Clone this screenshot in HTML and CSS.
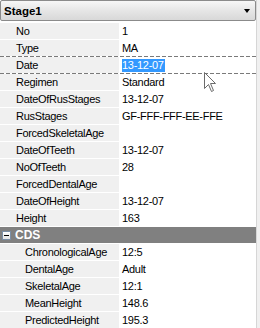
FILE: index.html
```html
<!DOCTYPE html>
<html>
<head>
<meta charset="utf-8">
<link rel="stylesheet" href="styles.css">
</head>
<body>
<div class="grid">
  <div class="header">
    <span class="title">Stage1</span>
    <span class="arrow"></span>
  </div>
  <div class="rows">
    <div class="row"><div class="name">No</div><div class="value">1</div></div>
    <div class="row"><div class="name">Type</div><div class="value">MA</div></div>
    <div class="row editing"><div class="name">Date</div><div class="value"><span class="sel">13-12-07</span></div></div>
    <div class="row after-edit"><div class="name">Regimen</div><div class="value">Standard</div></div>
    <div class="row"><div class="name">DateOfRusStages</div><div class="value">13-12-07</div></div>
    <div class="row"><div class="name">RusStages</div><div class="value">GF-FFF-FFF-EE-FFE</div></div>
    <div class="row"><div class="name">ForcedSkeletalAge</div><div class="value"></div></div>
    <div class="row"><div class="name">DateOfTeeth</div><div class="value">13-12-07</div></div>
    <div class="row"><div class="name">NoOfTeeth</div><div class="value">28</div></div>
    <div class="row"><div class="name">ForcedDentalAge</div><div class="value"></div></div>
    <div class="row"><div class="name">DateOfHeight</div><div class="value">13-12-07</div></div>
    <div class="row"><div class="name">Height</div><div class="value">163</div></div>
    <div class="cat"><span class="toggle"><span class="minus"></span></span><span class="cat-label">CDS</span></div>
    <div class="row child"><div class="name">ChronologicalAge</div><div class="value">12:5</div></div>
    <div class="row child"><div class="name">DentalAge</div><div class="value">Adult</div></div>
    <div class="row child"><div class="name">SkeletalAge</div><div class="value">12:1</div></div>
    <div class="row child"><div class="name">MeanHeight</div><div class="value">148.6</div></div>
    <div class="row child"><div class="name">PredictedHeight</div><div class="value">195.3</div></div>
  </div>
  <svg class="cursor" width="13" height="20" viewBox="0 0 13 20">
    <path d="M0.5 0.5 L0.5 16.5 L4.5 12.5 L7.5 19.5 L9.5 18.5 L6.5 11.5 L11.5 11.5 Z" fill="#fff" stroke="#6b6b6b" stroke-width="1"/>
  </svg>
</div>
</body>
</html>
```

FILE: styles.css
```css
html, body {
  margin: 0;
  padding: 0;
  background: #f0f0f0;
}
.grid {
  position: relative;
  width: 256px;
  height: 328px;
  background: #fff;
  border-right: 1px solid #d6d6d6;
  font-family: "Liberation Sans", Arial, sans-serif;
  font-size: 11px;
  letter-spacing: -0.3px;
  color: #000;
  overflow: hidden;
}
.header {
  box-sizing: border-box;
  height: 21px;
  margin-bottom: 1px;
  border: 1px solid #8b8b8b;
  border-radius: 2px;
  background: linear-gradient(#f7f7f7, #e6e6e6 50%, #d8d8d8);
  display: flex;
  align-items: center;
  justify-content: space-between;
  padding: 0 5px 0 3px;
}
.title {
  font-weight: bold;
  font-size: 11.5px;
  letter-spacing: 0;
}
.arrow {
  width: 0;
  height: 0;
  border-left: 3.5px solid transparent;
  border-right: 3.5px solid transparent;
  border-top: 4px solid #000;
}
.row {
  display: grid;
  grid-template-columns: 119px 1fr;
  border-top: 1px solid #fff;
  height: 16px;
  line-height: 16px;
  position: relative;
}
.name {
  background: #f0f0f0;
  padding-left: 16px;
  white-space: nowrap;
  overflow: hidden;
}
.child .name {
  padding-left: 25px;
}
.value {
  padding-left: 3px;
  white-space: nowrap;
}
.sel {
  background: #3399ff;
  color: #fff;
  display: inline-block;
  line-height: 13px;
  padding-right: 1px;
}
.editing::before,
.after-edit::before {
  content: "";
  position: absolute;
  left: 0;
  right: 0;
  top: -1px;
  height: 1px;
  background: repeating-linear-gradient(90deg, #7a7a7a 0 4px, transparent 4px 6px);
}
.cat {
  display: flex;
  align-items: center;
  height: 16px;
  border-top: 1px solid #fff;
  background: #808080;
  color: #fff;
  font-weight: bold;
  font-size: 12px;
  letter-spacing: 0;
}
.toggle {
  box-sizing: border-box;
  width: 9px;
  height: 9px;
  margin: 0 4px 0 2px;
  border: 1px solid #7a8ea6;
  background: linear-gradient(#ffffff, #e4e4e4);
  display: flex;
  align-items: center;
  justify-content: center;
}
.minus {
  width: 5px;
  height: 1px;
  background: #000;
}
.cursor {
  position: absolute;
  left: 204px;
  top: 72px;
}
```
